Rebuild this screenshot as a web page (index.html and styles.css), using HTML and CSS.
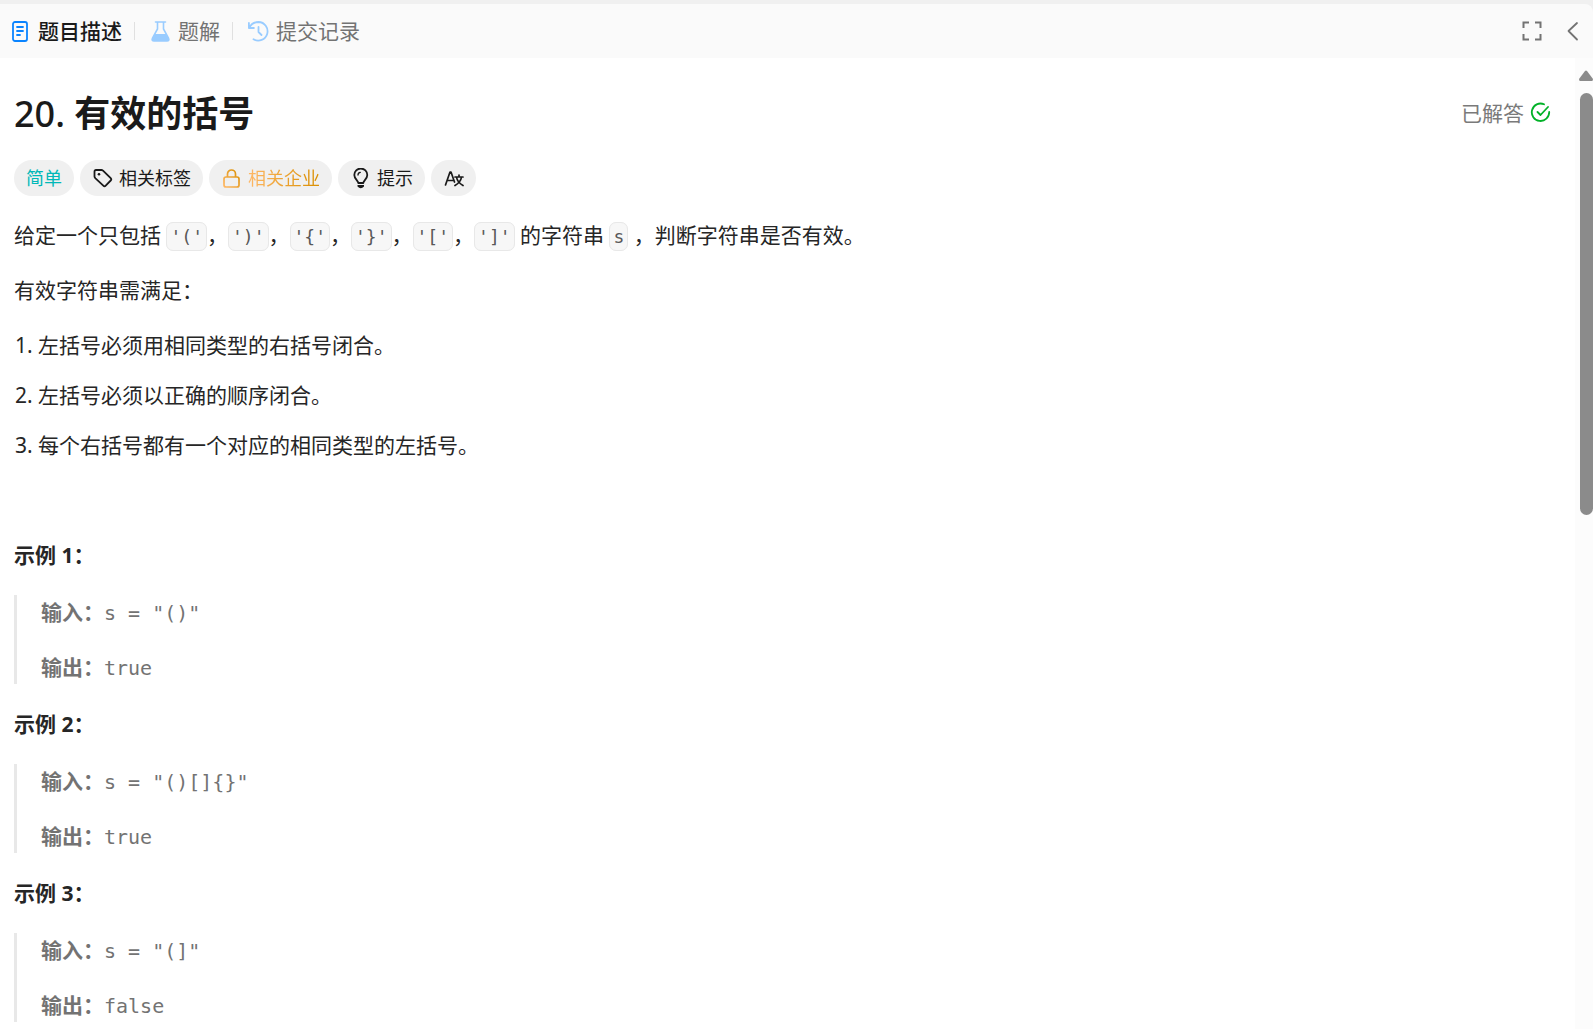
FILE: index.html
```html
<!DOCTYPE html>
<html lang="zh-CN">
<head>
    <meta charset="UTF-8">
    <meta name="viewport" content="width=device-width, initial-scale=1.0">
    <title>20. 有效的括号</title>
    <link rel="stylesheet" href="styles.css">
</head>
<body>
    <div class="panel">
        <header class="tabbar">
            <nav class="tabs">
                <button class="tab active" type="button">
                    <svg class="icon" viewBox="0 0 21 21" fill="none" stroke="#0a84ff" stroke-width="1.8" stroke-linecap="round">
                        <rect x="3" y="1" width="14" height="19" rx="2"/>
                        <path d="M7 6h6M7 10h6M7 14h3"/>
                    </svg>
                    题目描述
                </button>
                <button class="tab" type="button">
                    <svg class="icon" viewBox="0 0 21 21">
                        <path d="M5.500 1h10M7.500 1v7L2.500 17c-1 2 0 3 1.500 3h13c1.500 0 2.500-1 1.500-3L13.500 8V1" fill="none" stroke="#99ccff" stroke-width="1.600" stroke-linecap="round"/>
                        <path d="M5 13h11l2.500 4c1 2 0 3-1.500 3H4c-1.500 0-2.500-1-1.500-3z" fill="#99ccff"/>
                    </svg>
                    题解
                </button>
                <button class="tab" type="button">
                    <svg class="icon" viewBox="0 0 21 21" fill="none" stroke="#99ccff" stroke-width="1.800" stroke-linecap="round" stroke-linejoin="round">
                        <path d="M0.900 2v5h5M1.200 7C3 3 6.500 1 10.500 1a9.300 9.300 0 1 1-5 17.300M10.500 6v5l3 3"/>
                    </svg>
                    提交记录
                </button>
            </nav>
            <div class="tools">
                <button class="tool" type="button" aria-label="全屏">
                    <svg class="icon" viewBox="0 0 21 21" fill="none" stroke="#737373" stroke-width="2">
                        <path d="M2.500 7V1.500H8M14 1.500h5.500V7M19.500 13v5.500H14M8 18.500H2.500V13"/>
                    </svg>
                </button>
                <button class="tool" type="button" aria-label="收起">
                    <svg class="icon" viewBox="0 0 21 21" fill="none" stroke="#737373" stroke-width="1.800" stroke-linecap="round" stroke-linejoin="round">
                        <path d="M15 2L6.500 10l8.500 8.500"/>
                    </svg>
                </button>
            </div>
        </header>

        <div class="body">
            <main class="content">
                <div class="title-row">
                    <h1 class="title"><span class="number">20.</span> 有效的括号</h1>
                    <div class="status">
                        已解答
                        <svg class="icon" viewBox="0 0 21 21" fill="none" stroke="#02b128" stroke-width="1.800" stroke-linecap="round" stroke-linejoin="round">
                            <path d="M14 2.300A8.700 8.700 0 1 0 19.200 10M7.500 10l3 3 7.500-8"/>
                        </svg>
                    </div>
                </div>

                <div class="chips">
                    <span class="chip easy">简单</span>
                    <button class="chip" type="button">
                        <svg class="icon" viewBox="0 0 21 21" fill="none" stroke="#1a1a1a" stroke-width="1.800" stroke-linejoin="round">
                            <path d="M4 2H9.500c.7 0 1 .2 1.500.6l7.700 7.600c.8.800.8 1.500 0 2.300l-5 5.200c-.8.800-1.600.8-2.400 0L3.500 10.300C2.900 9.700 2.500 9.200 2.500 8.500V3.500C2.500 2.500 3 2 4 2z"/>
                            <circle cx="7" cy="6.300" r="1.300" fill="#1a1a1a" stroke="none"/>
                        </svg>
                        相关标签
                    </button>
                    <button class="chip company" type="button">
                        <svg class="icon" viewBox="0 0 21 21" fill="none" stroke="url(#gold)" stroke-width="1.700">
                            <defs>
                                <linearGradient id="gold" x1="0" y1="1" x2="1" y2="0">
                                    <stop offset="0" stop-color="#ffb866"/>
                                    <stop offset="1" stop-color="#d98e00"/>
                                </linearGradient>
                            </defs>
                            <path d="M5 9H16q2 0 2 2v6q0 2-2 2H5q-2 0-2-2v-6q0-2 2-2zM6.500 9V6a4 4 0 0 1 8 0v3"/>
                        </svg>
                        <span class="gold-text">相关企业</span>
                    </button>
                    <button class="chip" type="button">
                        <svg class="icon" viewBox="0 0 21 21" fill="none" stroke="#1a1a1a" stroke-width="1.800" stroke-linecap="round" stroke-linejoin="round">
                            <path d="M8.300 15c0-2.300-4-4-4-8a6.500 6.500 0 0 1 13 0c0 4-4 5.700-4 8z"/>
                            <path d="M8 7c0-1.500 1-2.500 2.300-2.700" stroke-width="1.300"/>
                            <path d="M7.500 17h6.500v1.500q-3.200 3.500-6.500 0z" fill="#1a1a1a" stroke="none"/>
                        </svg>
                        提示
                    </button>
                    <button class="chip" type="button" aria-label="切换语言">
                        <svg class="icon" viewBox="0 0 21 21" fill="none" stroke="#1a1a1a" stroke-width="1.700" stroke-linecap="round" stroke-linejoin="round">
                            <path d="M2.500 17L7 4h1L11.500 14M4 12.500h6M12 9h8M16 7v2M18.500 9c-.5 3.500-3 6.500-6.500 8.500M13.500 9c.5 3.500 3 6.500 6.500 8.500"/>
                        </svg>
                    </button>
                </div>

                <article class="description">
                    <p>给定一个只包括 <code>'('</code>，<code>')'</code>，<code>'{'</code>，<code>'}'</code>，<code>'['</code>，<code>']'</code> 的字符串 <code>s</code> ，判断字符串是否有效。</p>
                    <p>有效字符串需满足：</p>
                    <ol>
                        <li>左括号必须用相同类型的右括号闭合。</li>
                        <li>左括号必须以正确的顺序闭合。</li>
                        <li>每个右括号都有一个对应的相同类型的左括号。</li>
                    </ol>
                    <p>&nbsp;</p>

                    <section class="example">
                        <h2>示例 1：</h2>
                        <div class="sample">
                            <p><strong>输入：</strong><samp>s = "()"</samp></p>
                            <p><strong>输出：</strong><samp>true</samp></p>
                        </div>
                    </section>

                    <section class="example">
                        <h2>示例 2：</h2>
                        <div class="sample">
                            <p><strong>输入：</strong><samp>s = "()[]{}"</samp></p>
                            <p><strong>输出：</strong><samp>true</samp></p>
                        </div>
                    </section>

                    <section class="example">
                        <h2>示例 3：</h2>
                        <div class="sample">
                            <p><strong>输入：</strong><samp>s = "(]"</samp></p>
                            <p><strong>输出：</strong><samp>false</samp></p>
                        </div>
                    </section>
                </article>
            </main>

            <div class="scrollbar">
                <svg class="arrow" viewBox="0 0 14 11"><path d="M6 1q1-1 2 0l6 8q0 2-1 2H1q-1 0-1-2z" fill="#8b8b8b"/></svg>
                <div class="thumb"></div>
            </div>
        </div>
    </div>
</body>
</html>
```

FILE: styles.css
```css
* {
    box-sizing: border-box;
}

body {
    margin: 0;
    background-color: #f0f0f0;
    color: #262626;
    font-family: "Noto Sans", "Noto Sans CJK SC", sans-serif;
    font-size: 21px;
    line-height: 34px;
}

button {
    border: none;
    background: none;
    padding: 0;
    font: inherit;
    color: inherit;
    cursor: pointer;
}

h1, h2, p, ol {
    margin: 0;
}

.icon {
    width: 21px;
    height: 21px;
    flex: none;
}

.panel {
    display: flex;
    flex-direction: column;
    height: 100vh;
    padding-top: 4px;
    overflow: hidden;
}

/* Top tabs */
.tabbar {
    display: flex;
    justify-content: space-between;
    align-items: center;
    flex: none;
    height: 54px;
    padding: 0 10px;
    background-color: #fafafa;
    border-radius: 0 8px 0 0;
}

.tabs, .tools {
    display: flex;
    align-items: center;
}

.tools {
    gap: 20px;
}

.tool {
    display: flex;
}

.tab {
    display: flex;
    align-items: center;
    gap: 7px;
    height: 18px;
    padding: 0 12px 0 15px;
    color: #737373;
}

.tab + .tab {
    border-left: 1px solid #e0e0e0;
}

.tab:first-child {
    padding-left: 0;
}

.tab.active {
    color: #1a1a1a;
    font-weight: 500;
}

/* Body */
.body {
    display: flex;
    flex: 1;
    min-height: 0;
    background-color: #fff;
}

.content {
    flex: 1;
    min-width: 0;
    padding: 32px 24px 0 14px;
    overflow: hidden;
}

.title-row {
    display: flex;
    justify-content: space-between;
    align-items: center;
}

.title {
    color: #1a1a1a;
    font-size: 36px;
    font-weight: 600;
    line-height: 48px;
}

.number {
    font-weight: 500;
}

.status {
    display: flex;
    align-items: center;
    gap: 6px;
    padding-bottom: 3px;
    color: #7a7a7a;
}

.chips {
    display: flex;
    gap: 6px;
    margin: 22px 0;
}

.chip {
    display: flex;
    align-items: center;
    gap: 6px;
    height: 36px;
    padding: 0 12px;
    border-radius: 18px;
    background-color: #f0f0f0;
    color: #1a1a1a;
    font-size: 18px;
}

.easy {
    color: #00b8b8;
}

.gold-text {
    background: linear-gradient(90deg, #ffb866, #d98e00);
    -webkit-background-clip: text;
    background-clip: text;
    color: transparent;
}

/* Problem text */
.description > p {
    margin-bottom: 21px;
}

.description ol {
    padding-left: 24px;
    margin-bottom: 21px;
}

.description li + li {
    margin-top: 16px;
}

code, samp {
    font-family: "DejaVu Sans Mono", monospace;
    line-height: 1;
}

code {
    padding: 3px;
    border: 1px solid #e8e8e8;
    border-radius: 7px;
    background-color: #f7f7f7;
    color: #595959;
    font-size: 18px;
}

samp {
    font-size: 20px;
}

.example + .example {
    margin-top: 23px;
}

.example h2 {
    margin-bottom: 23px;
    font-size: 21px;
    font-weight: 700;
}

.sample {
    padding-left: 24px;
    border-left: 3px solid #e8e8e8;
    color: #737373;
}

.sample p + p {
    margin-top: 21px;
}

/* Scrollbar */
.scrollbar {
    display: flex;
    flex-direction: column;
    align-items: flex-end;
    flex: none;
    width: 18px;
    padding-top: 12px;
    background-color: #fcfcfc;
}

.arrow {
    width: 14px;
    height: 11px;
}

.thumb {
    width: 13px;
    height: 44%;
    margin-top: 12px;
    border-radius: 7px;
    background-color: #8b8b8b;
}
```
